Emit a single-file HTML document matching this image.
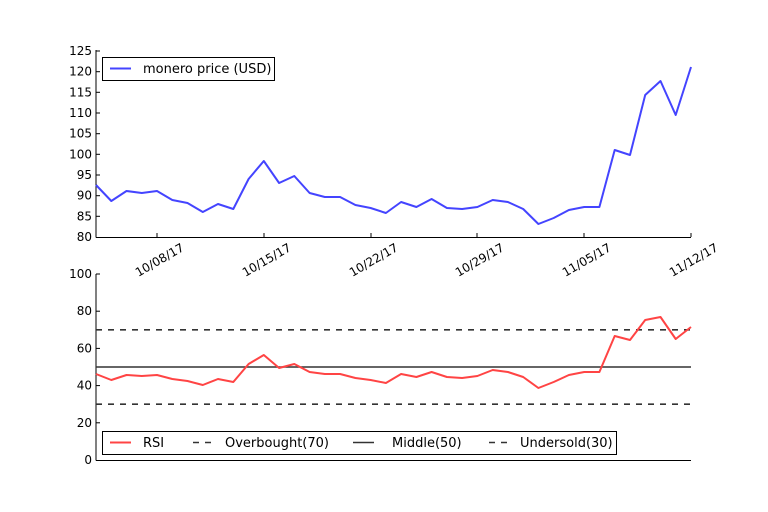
<!DOCTYPE html>
<html><head><meta charset="utf-8"><style>
html,body{margin:0;padding:0;background:#fff;}
svg{display:block;font-family:"DejaVu Sans","Liberation Sans",sans-serif;}
</style></head><body>
<svg width="768" height="512" viewBox="0 0 768 512" xmlns="http://www.w3.org/2000/svg">
<rect width="768" height="512" fill="#fff"/>
<g stroke="#000" stroke-width="1" fill="none">
<line x1="96" y1="50" x2="96" y2="237.5"/>
<line x1="96" y1="237.5" x2="691" y2="237.5"/>
<line x1="96" y1="274" x2="96" y2="460.5"/>
<line x1="96" y1="460.5" x2="691" y2="460.5"/>
</g>
<g stroke="#000" stroke-width="1">
<line x1="96" y1="51" x2="100" y2="51"/><line x1="96" y1="71.7" x2="100" y2="71.7"/><line x1="96" y1="92.3" x2="100" y2="92.3"/><line x1="96" y1="113" x2="100" y2="113"/><line x1="96" y1="133.7" x2="100" y2="133.7"/><line x1="96" y1="154.3" x2="100" y2="154.3"/><line x1="96" y1="175" x2="100" y2="175"/><line x1="96" y1="195.7" x2="100" y2="195.7"/><line x1="96" y1="216.3" x2="100" y2="216.3"/>
<line x1="157" y1="237" x2="157" y2="233"/><line x1="264" y1="237" x2="264" y2="233"/><line x1="371" y1="237" x2="371" y2="233"/><line x1="477" y1="237" x2="477" y2="233"/><line x1="584" y1="237" x2="584" y2="233"/><line x1="691" y1="237" x2="691" y2="233"/>
<line x1="96" y1="274" x2="100" y2="274"/><line x1="96" y1="311.2" x2="100" y2="311.2"/><line x1="96" y1="348.4" x2="100" y2="348.4"/><line x1="96" y1="385.6" x2="100" y2="385.6"/><line x1="96" y1="422.8" x2="100" y2="422.8"/>
</g>
<g font-size="12" fill="#000" text-anchor="end">
<text x="92" y="55">125</text><text x="92" y="75.7">120</text><text x="92" y="96.3">115</text><text x="92" y="117">110</text><text x="92" y="137.7">105</text><text x="92" y="158.3">100</text><text x="92" y="179">95</text><text x="92" y="199.7">90</text><text x="92" y="220.3">85</text><text x="92" y="241">80</text>
<text x="92" y="278">100</text><text x="92" y="315.2">80</text><text x="92" y="352.4">60</text><text x="92" y="389.6">40</text><text x="92" y="426.8">20</text><text x="92" y="464">0</text>
<text transform="translate(185,250) rotate(-30)">10/08/17</text>
<text transform="translate(292,250) rotate(-30)">10/15/17</text>
<text transform="translate(399,250) rotate(-30)">10/22/17</text>
<text transform="translate(505,250) rotate(-30)">10/29/17</text>
<text transform="translate(612,250) rotate(-30)">11/05/17</text>
<text transform="translate(719,250) rotate(-30)">11/12/17</text>
</g>
<polyline fill="none" stroke="#4444ff" stroke-width="2" stroke-linejoin="round" points="96,185 111.3,201 126.5,191 141.8,193 157,191 172.3,200 187.5,203 202.8,212 218,204 233.3,209 248.6,179 263.8,161 279.1,183 294.3,176 309.6,193 324.8,197 340.1,197 355.4,205 370.6,208 385.9,213 401.1,202 416.4,207 431.6,199 446.9,208 462.1,209 477.4,207 492.7,200 507.9,202 523.2,209 538.4,224 553.7,218 568.9,210 584.2,207 599.4,207 614.7,150 630,155 645.2,95 660.5,81 675.7,115 691,67"/>
<rect x="102.5" y="57.5" width="172" height="23" fill="#fff" stroke="#000"/>
<line x1="110" y1="68.5" x2="131" y2="68.5" stroke="#4444ff" stroke-width="2"/>
<text x="143" y="73" font-size="13">monero price (USD)</text>
<line x1="96" y1="329.8" x2="691" y2="329.8" stroke="#333" stroke-width="1.6" stroke-dasharray="6,6"/>
<line x1="96" y1="367" x2="691" y2="367" stroke="#333" stroke-width="1.6"/>
<line x1="96" y1="404.2" x2="691" y2="404.2" stroke="#333" stroke-width="1.6" stroke-dasharray="6,6"/>
<polyline fill="none" stroke="#ff4444" stroke-width="2" stroke-linejoin="round" points="96,374 111.3,380 126.5,375 141.8,376 157,375 172.3,379 187.5,381 202.8,385 218,379 233.3,382 248.6,364 263.8,355 279.1,368 294.3,364 309.6,372 324.8,374 340.1,374 355.4,378 370.6,380 385.9,383 401.1,374 416.4,377 431.6,372 446.9,377 462.1,378 477.4,376 492.7,370 507.9,372 523.2,377 538.4,388 553.7,382 568.9,375 584.2,372 599.4,372 614.7,336 630,340 645.2,320 660.5,317 675.7,339 691,327"/>
<rect x="102.5" y="431.5" width="514" height="23" fill="#fff" stroke="#000"/>
<line x1="110" y1="442.5" x2="131" y2="442.5" stroke="#ff4444" stroke-width="2"/>
<line x1="193" y1="442.5" x2="213" y2="442.5" stroke="#333" stroke-width="1.6" stroke-dasharray="6,6"/>
<line x1="353" y1="442.5" x2="374" y2="442.5" stroke="#333" stroke-width="1.6"/>
<line x1="489" y1="442.5" x2="509" y2="442.5" stroke="#333" stroke-width="1.6" stroke-dasharray="6,6"/>
<g font-size="13" fill="#000">
<text x="143" y="447">RSI</text>
<text x="225" y="447">Overbought(70)</text>
<text x="392" y="447">Middle(50)</text>
<text x="520" y="447">Undersold(30)</text>
</g>
</svg>
</body></html>
